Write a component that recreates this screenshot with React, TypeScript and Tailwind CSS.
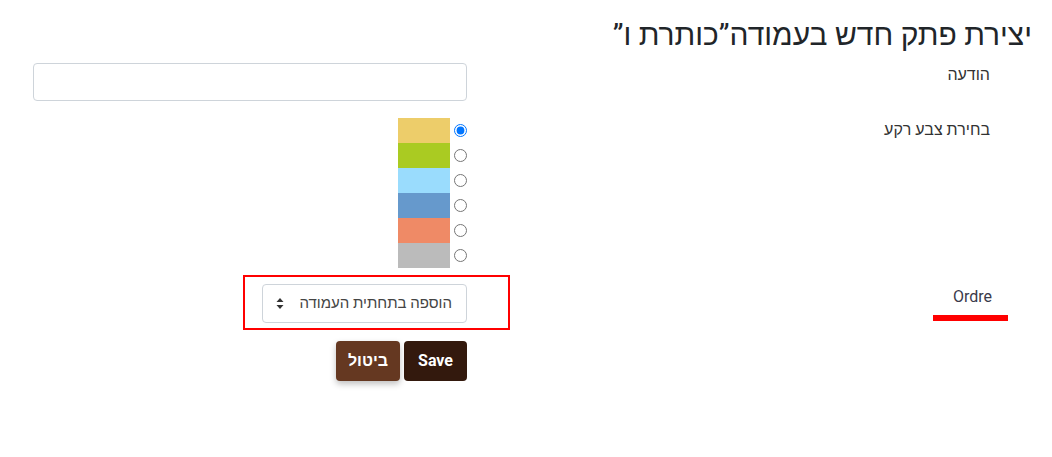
import React, { useState } from "react";

const colors = ["#EDCD6A", "#AACB22", "#9ADCFD", "#6699CC", "#EF8A66", "#BBBBBB"];

const App: React.FC = () => {
  const [selectedColor, setSelectedColor] = useState(0);

  return (
    <div
      dir="rtl"
      className="min-h-screen bg-white text-[#212529]"
      style={{ fontFamily: "Roboto, 'Liberation Sans', sans-serif" }}
    >
      <h1 className="pr-[20px] pt-[17px] text-[30px] leading-[36px] font-normal">
        יצירת פתק חדש בעמודה”כותרת ו”
      </h1>

      <form className="mt-[10px] flex flex-col pr-[62px] pl-[33px]">
        <div className="flex">
          <label className="w-[523px] shrink-0 text-[16px] leading-6 text-[#333]">הודעה</label>
          <div className="flex-1">
            <input
              type="text"
              className="h-[38px] w-full rounded-[4px] border border-[#ced4da] bg-white px-3 text-[15px] outline-none"
            />
          </div>
        </div>

        <div className="mt-[17px] flex">
          <label className="w-[523px] shrink-0 text-[16px] leading-6 text-[#333]">בחירת צבע רקע</label>
          <div className="flex flex-1 flex-col">
            {colors.map((color, index) => (
              <label key={color} className="flex h-[25px] items-center gap-[4px]">
                <input
                  type="radio"
                  name="bgColor"
                  checked={selectedColor === index}
                  onChange={() => setSelectedColor(index)}
                  className="m-0 h-[13px] w-[13px]"
                />
                <span className="h-[25px] w-[52px]" style={{ backgroundColor: color }} />
              </label>
            ))}
          </div>
        </div>

        <div className="relative mt-[16px] flex">
          <label className="w-[523px] shrink-0 pt-[1px] text-[16px] leading-6 text-[#3a3a4a]">
            <span className="mr-[-2px]">Ordre</span>
          </label>
          <div className="flex flex-1">
            <div className="flex h-[39px] w-[205px] items-center justify-between rounded-[4px] border border-[#ced4da] bg-white pl-[13px] pr-[14px] text-[15px] text-[#444]">
              <span>הוספה בתחתית העמודה</span>
              <svg width="8" height="11" viewBox="0 0 8 11" className="text-[#333]">
                <path d="M4 0 L7.5 4 L0.5 4 Z" fill="currentColor" />
                <path d="M4 11 L7.5 7 L0.5 7 Z" fill="currentColor" />
              </svg>
            </div>
          </div>

          {/* annotation marks */}
          <div className="pointer-events-none absolute top-[-9px] left-[210px] h-[55px] w-[267px] border-2 border-[#ff0000]" />
          <div className="pointer-events-none absolute top-[31px] left-[900px] h-[6px] w-[75px] bg-[#ff0000]" />
        </div>

        <div className="mt-[18px] flex">
          <div className="w-[523px] shrink-0" />
          <div className="flex flex-1 gap-[4px]">
            <button
              type="button"
              className="h-[40px] w-[63px] rounded-[4px] bg-[#33190D] text-[16px] font-bold text-white"
            >
              Save
            </button>
            <button
              type="button"
              className="h-[40px] w-[64px] rounded-[4px] bg-[#653821] text-[16px] font-bold text-white shadow-[0_3px_6px_rgba(0,0,0,0.25)]"
            >
              ביטול
            </button>
          </div>
        </div>
      </form>
    </div>
  );
};

export default App;
